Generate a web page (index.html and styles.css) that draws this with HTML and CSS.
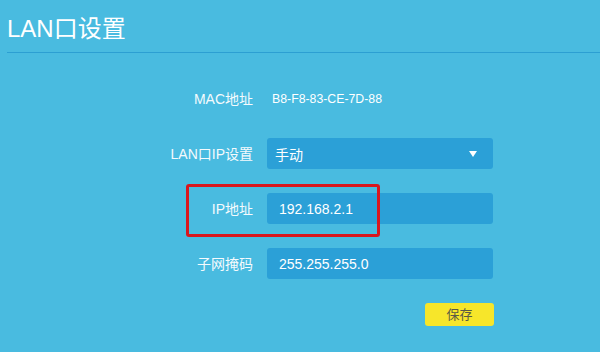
FILE: index.html
```html
<!DOCTYPE html>
<html lang="zh-CN">
<head>
<meta charset="utf-8">
<title>LAN口设置</title>
<link rel="stylesheet" href="styles.css">
</head>
<body>
<div class="page">
  <header class="header">
    <h1 class="title">LAN口设置</h1>
  </header>
  <div class="form">
    <div class="row">
      <div class="label">MAC地址</div>
      <div class="value mac">B8-F8-83-CE-7D-88</div>
    </div>
    <div class="row">
      <div class="label">LAN口IP设置</div>
      <div class="field select">
        <span class="select-text">手动</span>
        <span class="arrow"></span>
      </div>
    </div>
    <div class="row">
      <div class="label">IP地址</div>
      <div class="field input">192.168.2.1</div>
    </div>
    <div class="row">
      <div class="label">子网掩码</div>
      <div class="field input">255.255.255.0</div>
    </div>
    <div class="row actions">
      <div></div>
      <div class="btn-wrap"><button class="btn">保存</button></div>
    </div>
    <div class="highlight"></div>
  </div>
</div>
</body>
</html>
```
FILE: styles.css
```css
html, body {
  margin: 0;
  padding: 0;
}
body {
  width: 600px;
  height: 352px;
  overflow: hidden;
  background: #49bbe0;
  font-family: "Liberation Sans", "Noto Sans CJK SC", sans-serif;
  color: #ffffff;
}
.page {
  position: relative;
}
.header {
  margin-left: 7px;
  padding-top: 14px;
  height: 38px;
  border-bottom: 1px solid #2c9fd2;
  box-sizing: border-box;
  height: 53px;
}
.title {
  margin: 0;
  font-size: 24px;
  font-weight: normal;
  line-height: 30px;
  color: #ffffff;
}
.form {
  position: relative;
  padding-top: 30px;
}
.row {
  display: grid;
  grid-template-columns: 253px 226px;
  column-gap: 14px;
  height: 31px;
  margin-bottom: 24px;
  align-items: center;
}
.label {
  text-align: right;
  font-size: 14px;
  line-height: 20px;
  color: #f4fafd;
}
.value.mac {
  padding-left: 5px;
  font-size: 12.3px;
  color: #ffffff;
}
.field {
  height: 31px;
  box-sizing: border-box;
  background: #2ba0d7;
  border-radius: 3px;
  display: flex;
  align-items: center;
  font-size: 14px;
  color: #ffffff;
}
.select {
  padding-left: 8px;
  padding-right: 16px;
  justify-content: space-between;
}
.arrow {
  width: 0;
  height: 0;
  border-left: 4.5px solid transparent;
  border-right: 4.5px solid transparent;
  border-top: 6px solid #ffffff;
  margin-top: 1px;
}
.input {
  padding-left: 12px;
}
.actions {
  margin-top: 5px;
  height: 23px;
}
.btn-wrap {
  display: flex;
  justify-content: flex-end;
  padding-right: 0;
  margin-right: -1px;
}
.btn {
  width: 69px;
  height: 23px;
  border: none;
  border-radius: 3px;
  background: #f7e62a;
  color: #5a5a45;
  font-family: "Liberation Sans", "Noto Sans CJK SC", sans-serif;
  font-size: 13px;
  padding: 0;
  line-height: 23px;
}
.highlight {
  position: absolute;
  left: 186px;
  top: 131px;
  width: 194px;
  height: 53px;
  box-sizing: border-box;
  border: 3px solid #d9161e;
  border-radius: 3px;
}
```
